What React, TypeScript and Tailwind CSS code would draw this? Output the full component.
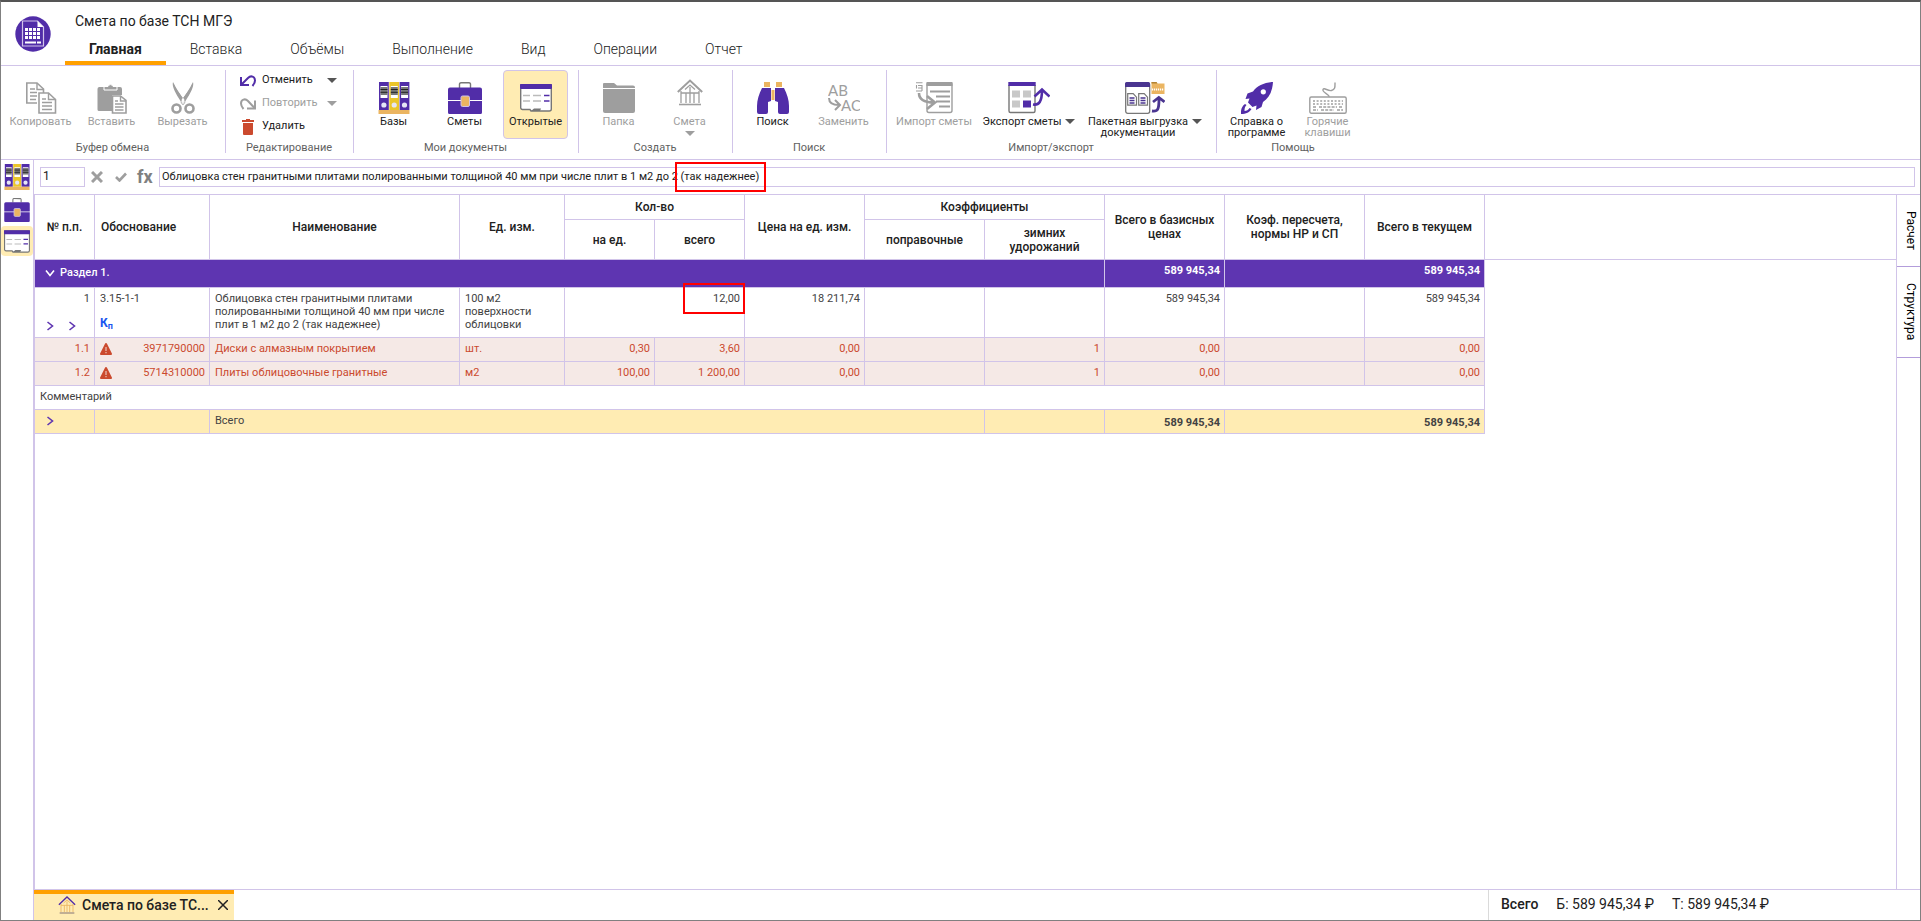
import React from "react";

type IconProps = { className?: string };

const P = "#512da8";
const G = "#9e9e9e";
const T = "#ebb561";

/* ---------- icons ---------- */

function LogoIcon() {
  return (
    <svg viewBox="0 0 36 36" className="size-9" aria-hidden="true">
      <circle cx="18" cy="18" r="17.7" fill={P} />
      <path d="M7.500 5h15l6 6v19h-21z" fill="none" stroke="#d1c4e9" strokeWidth="1.200" />
      <path d="M22.500 5v6h6z" fill="#fff" />
      <path
        d="M10 12h3v3h-3zM14 12h3v3h-3zM18 12h3v3h-3zM22 12h3v3h-3zM10 16h3v3h-3zM14 16h3v3h-3zM18 16h3v3h-3zM22 16h3v3h-3zM10 20h3v3h-3zM14 20h3v3h-3zM18 20h3v3h-3zM22 20h3v3h-3zM10 25.500h11v2h-11zM22 25.500h4v2h-4z"
        fill="#fff"
      />
    </svg>
  );
}

function CopyIcon() {
  return (
    <svg viewBox="0 0 32 32" className="size-8" fill="none" stroke={G} strokeWidth="1.600" aria-hidden="true">
      <path d="M12 21H1.800V1H12l6.500 6v4" />
      <path d="M12 1v6.500h6.500M5 7h5M5 10.500h7M5 14h7M5 17.500h6" strokeWidth="1.400" />
      <path d="M14 11h9.500l7 6.500V31H14z" fill="#fff" />
      <path d="M23.500 11v6.500h7M17 17h4M17 20.500h10M17 24h10M17 27.500h10" strokeWidth="1.400" />
    </svg>
  );
}

function PasteIcon() {
  return (
    <svg viewBox="0 0 32 32" className="size-8" aria-hidden="true">
      <path d="M3 5h6V4h3a3 3 0 0 1 5 0h3v1h4a2 2 0 0 1 2 2v6H16v16H3a1.500 1.500 0 0 1-1.500-1.500V7A2 2 0 0 1 3 5z" fill={G} />
      <path d="M8 4.500h4a2.600 2.600 0 0 1 5 0h4V8H8z" fill={G} stroke="#fff" strokeWidth="1" />
      <path d="M16.500 14h8l5.500 4.500V31H16.500z" fill="#fff" stroke={G} strokeWidth="1.600" />
      <path d="M24.500 14v5H30M19 19h3M19 22h8.500M19 25h8.500M19 28h8.500" fill="none" stroke={G} strokeWidth="1.400" />
    </svg>
  );
}

function CutIcon() {
  return (
    <svg viewBox="0 0 32 32" className="size-8" aria-hidden="true">
      <path d="M6 0c-1.500 4 3 12 7.500 19l3 4 2-3C14 13 9 7 6 0zM26 0c1.500 4-3 12-7.500 19l-3 4-2-3C18 13 23 7 26 0z" fill={G} />
      <path d="M6.500 1c-.5 5 4 12 9.500 20l2-2C13 12 9 8 6.500 1zM25.500 1c.5 5-4 12-9.500 20l-2-2C19 12 23 8 25.500 1z" fill={G} />
      <circle cx="9.500" cy="26.500" r="4" fill="none" stroke={G} strokeWidth="2.600" />
      <circle cx="22.500" cy="26.500" r="4" fill="none" stroke={G} strokeWidth="2.600" />
      <circle cx="16" cy="17.500" r="1.200" fill="#fff" />
    </svg>
  );
}

function UndoIcon() {
  return (
    <svg viewBox="0 0 16 12" className="h-3 w-4" fill="none" stroke={P} strokeWidth="2" aria-hidden="true">
      <path d="M1 2v8h8" />
      <path d="M1.500 9.500 8 3c3-3 7-1.500 7 2.500 0 2-.8 3.500-2.500 5.500" />
    </svg>
  );
}

function RedoIcon() {
  return (
    <svg viewBox="0 0 16 12" className="h-3 w-4" fill="none" stroke={G} strokeWidth="2" aria-hidden="true">
      <path d="M15 2.500v8H7" />
      <path d="M14.500 10 8 3C5 0 1 1.500 1 5.500c0 2 .8 3.500 2.500 5.500" />
    </svg>
  );
}

function TrashIcon() {
  return (
    <svg viewBox="0 0 16 16" className="size-4" fill="#cb4a2e" aria-hidden="true">
      <path d="M2 1h4V0h4v1h4v2H2zM3 4h10v11a1 1 0 0 1-1 1H4a1 1 0 0 1-1-1z" />
    </svg>
  );
}

function BindersIcon({ className }: IconProps) {
  return (
    <svg viewBox="0 0 32 32" className={className ?? "size-8"} aria-hidden="true">
      {[
        { x: 1, c: P },
        { x: 11.300, c: "#ebc62b" },
        { x: 21.600, c: P },
      ].map((b) => (
        <g key={b.x}>
          <rect x={b.x} y="0" width="9.800" height="28" fill={b.c} />
          <rect x={b.x + 1.500} y="4" width="7" height="12" fill="#fff" />
          <rect x={b.x + 1.500} y="5" width="7" height="8" fill="#777" />
          <path d={`M${b.x + 1.500} 7.500h7M${b.x + 1.500} 10.300h7`} stroke="#222" strokeWidth="1" />
          <circle cx={b.x + 4.900} cy="23" r="2.600" fill="#e6e6f5" />
        </g>
      ))}
      <rect x="0.500" y="28" width="31" height="4" fill={T} />
    </svg>
  );
}

function BriefcaseIcon({ className }: IconProps) {
  return (
    <svg viewBox="0 0 34 32" className={className ?? "h-8 w-[34px]"} aria-hidden="true">
      <path d="M11.500 6V2a1.500 1.500 0 0 1 1.500-1.200h8A1.500 1.500 0 0 1 22.500 2v4" fill="none" stroke="#777" strokeWidth="1.400" />
      <path d="M2 5.500h30a2 2 0 0 1 2 2V18H0V7.500a2 2 0 0 1 2-2zM0 19h34v11.500a1.500 1.500 0 0 1-1.500 1.500h-31A1.500 1.500 0 0 1 0 30.500z" fill={P} />
      <rect x="13" y="14" width="8.500" height="10.500" rx="1.500" fill={T} stroke="#cfc4ea" strokeWidth="1" />
    </svg>
  );
}

function OpenDocsIcon({ className }: IconProps) {
  return (
    <svg viewBox="0 0 32 28" className={className ?? "h-7 w-8"} aria-hidden="true">
      <path d="M.7 1h30.600v24a2 2 0 0 1-2 2H11l-1-1.500H2.500A2 2 0 0 1 .7 24z" fill="#fff" stroke="#777" strokeWidth="1.400" />
      <rect width="32" height="5" rx="1" fill={P} />
      <path d="M3 11.500h7M13 11.500h8M3 17h7M13 17h8" stroke="#bbb" strokeWidth="1.300" />
      <path d="M24 11.500h5.500M24 17h5.500" stroke={P} strokeWidth="1.500" />
      <path d="M11 27l3-2.500h7L20 27z" fill="#777" />
    </svg>
  );
}

function FolderIcon() {
  return (
    <svg viewBox="0 0 32 32" className="size-8" aria-hidden="true">
      <path d="M0 6V2a1 1 0 0 1 1-1h10l3 2.500h16a2 2 0 0 1 2 2V6z" fill={G} />
      <path d="M0 7h32v22a2 2 0 0 1-2 2H2a2 2 0 0 1-2-2z" fill={G} />
    </svg>
  );
}

function HouseIcon({ roof, wall, base, className }: { roof: string; wall: string; base: string; className: string }) {
  return (
    <svg viewBox="0 0 26 27" className={className} fill="none" aria-hidden="true">
      <path d="M4 12v12M22 12v12M9 14v10M17 14v10M13 8v16M4 14h18M8 10.500l5-4.500 5 4.500" stroke={wall} strokeWidth="1.300" />
      <path d="M.8 13 13 1.500 25.200 13" stroke={roof} strokeWidth="2" />
      <path d="M2 25.500h22" stroke={base} strokeWidth="1.600" />
    </svg>
  );
}

function BinocularsIcon() {
  return (
    <svg viewBox="0 0 32 32" className="size-8" aria-hidden="true">
      <path d="M7 0h6v5H7zM19 0h6v5h-6zM14.500 8h3v10h-3z" fill={T} />
      <path d="M5 6h9v13l-3 1v10a2 2 0 0 1-2 2H2a2 2 0 0 1-2-2v-6c0-6 2-12 5-18zM27 6h-9v13l3 1v10a2 2 0 0 0 2 2h7a2 2 0 0 0 2-2v-6c0-6-2-12-5-18z" fill={P} />
    </svg>
  );
}

function ReplaceIcon() {
  return (
    <svg viewBox="0 0 32 32" className="size-8" aria-hidden="true">
      <text x="0" y="14" fontSize="15" fill={G} className="font-[Lato]">AB</text>
      <text x="13" y="29" fontSize="15" fill={G} className="font-[Lato]">AC</text>
      <path d="M1 16c0 5 3 7 10 7M7 18l5 5-5 5" fill="none" stroke={G} strokeWidth="2" />
    </svg>
  );
}

function ImportIcon() {
  return (
    <svg viewBox="0 0 38 32" className="h-8 w-[38px]" fill="none" stroke={G} aria-hidden="true">
      <path d="M12 4v24.500a2 2 0 0 0 2 2h21a2 2 0 0 0 2-2V2H12z" strokeWidth="1.400" />
      <path d="M11.500 0h26v4h-26z" fill={G} stroke="none" />
      <path d="M15 9.500h20M21 14.500h14M21 19.500h14M24 24.500h11" strokeWidth="1.800" />
      <path d="M1 .7h6.500M7 3v6M1 9h6M3 3.500h4M3 6h4M1.500 3v3.500" strokeWidth="1.100" />
      <path d="M4 11c0 6 5 9.500 15 9.500M12 14l8 6.500-8 6.500" strokeWidth="2.600" />
    </svg>
  );
}

function ExportIcon() {
  return (
    <svg viewBox="0 0 42 32" className="h-8 w-[42px]" fill="none" aria-hidden="true">
      <path d="M1 3v26a1.500 1.500 0 0 0 1.500 1.500h23A1.500 1.500 0 0 0 27 29V3" stroke="#777" strokeWidth="1.400" />
      <path d="M.3 0h27.400v4H.3z" fill={P} />
      <path d="M4 8.500h8v7H4zM15 8.500h8v7h-8zM4 18.500h8v7H4z" fill="#c8c8c8" />
      <path d="M15 18.500h8v7h-8z" fill={P} />
      <path d="M25 22.500c6 1 9-3 9-14.500M26.500 14.500l7.500-7 7.500 7" stroke={P} strokeWidth="2.600" />
    </svg>
  );
}

function BatchIcon() {
  return (
    <svg viewBox="0 0 40 32" className="h-8 w-10" fill="none" aria-hidden="true">
      <rect x=".7" y="1" width="24" height="30.300" rx="2" stroke="#777" strokeWidth="1.300" />
      <path d="M0 5V1.500A1.500 1.500 0 0 1 1.500 0h22A1.500 1.500 0 0 1 25 1.500V5z" fill="#4a3590" />
      <path d="M2.700 11.700h5.500l3.300 3.500v8H2.700zM13.700 11.700h5.500l3.300 3.500v8h-8.800z" stroke="#777" strokeWidth="1.200" />
      <path d="M4.500 16h5M4.500 18.500h5M4.500 21h5M15.500 16h5M15.500 18.500h5M15.500 21h5" stroke="#4a3590" strokeWidth="1.400" />
      <path d="M26.500 0h5l1 1.500H39.500V12h-13z" fill={T} />
      <path d="M26.500 0h5l1 1.500h-6z" fill="#b28334" />
      <path d="M27 7.500h12" stroke="#fff" strokeWidth="2" strokeDasharray="1.200 .8" />
      <path d="M27 29c6 1 7-2 7-12M28 20l5.800-4.500L39.500 20" stroke="#4a3590" strokeWidth="2.800" />
    </svg>
  );
}

function RocketIcon() {
  return (
    <svg viewBox="0 0 32 32" className="size-8" aria-hidden="true">
      <path d="M32 0c-9 .5-16 4-20 9.500L6.500 11.500 4.500 17l4-.500L7 20.500l4.500 4.500 4-1.500-.5 4.500 5.500-3 1.500-5C28 16 31.500 9 32 0z" fill={P} />
      <circle cx="22.300" cy="9.800" r="2.600" fill="#fff" />
      <path d="M4 22c-3 2-4.500 6-4 10C5 32 9 30 10.500 27l-2-1c-1 2-3 3-5 3 0-3 .5-4.500 2-6z" fill={P} />
    </svg>
  );
}

function KeyboardIcon() {
  return (
    <svg viewBox="0 0 38 32" className="h-8 w-[38px]" fill="none" stroke={G} aria-hidden="true">
      <rect x=".8" y="15" width="36.400" height="16.200" rx="1.500" strokeWidth="1.400" />
      <path d="M4 19h30M4 22h30" strokeWidth="1.600" strokeDasharray="2 1.600" />
      <path d="M4 25h4M10 25h18M30 25h4M4 28h5M12 28h13M28 28h6" strokeWidth="1.500" strokeDasharray="3 1.200" />
      <path d="M20 15c1-3-7-4-6-7.500 1-2.500 5 2 8.500 1 4-1 3.500-4 3.500-8" strokeWidth="1.400" />
    </svg>
  );
}

function Caret({ muted }: { muted?: boolean }) {
  return (
    <svg viewBox="0 0 10 5" className="h-[5px] w-2.5 shrink-0" aria-hidden="true">
      <path d="M0 0h10L5 5z" fill={muted ? G : "#555"} />
    </svg>
  );
}

function Chevron({ className }: IconProps) {
  return (
    <svg viewBox="0 0 10 10" className={className ?? "size-2.5"} fill="none" stroke="currentColor" strokeWidth="1.600" aria-hidden="true">
      <path d="M2.500 1l5 4-5 4" />
    </svg>
  );
}

function WarningIcon() {
  return (
    <svg viewBox="0 0 12 12" className="size-3" aria-hidden="true">
      <path d="M6 0a1 1 0 0 1 .9.500l5 10a1 1 0 0 1-.9 1.500H1a1 1 0 0 1-.9-1.500l5-10A1 1 0 0 1 6 0z" fill="#cb4a2e" />
      <path d="M6 4v4M6 9v1.300" stroke="#e8b9ad" strokeWidth="1.300" />
    </svg>
  );
}

/* ---------- ribbon ---------- */

type ToolProps = {
  icon: React.ReactNode;
  label: React.ReactNode;
  muted?: boolean;
  active?: boolean;
  width?: string;
  below?: React.ReactNode;
};

function Tool({ icon, label, muted, active, width, below }: ToolProps) {
  return (
    <button
      type="button"
      className={`flex h-[69px] flex-col items-center whitespace-nowrap rounded border pt-[11px] text-[11px] leading-[11px] ${width ?? "w-[65px]"} ${
        active ? "border-[#d1c4e9] bg-[#ffecb3]" : "border-transparent"
      } ${muted ? "text-[#9e9e9e]" : "text-[#212121]"}`}
    >
      <span className="flex h-8 items-center justify-center">{icon}</span>
      <span className="mt-0.5">{label}</span>
      {below}
    </button>
  );
}

function Group({ title, children, last }: { title: string; children: React.ReactNode; last?: boolean }) {
  return (
    <section aria-label={title} className={`flex h-[83px] flex-col pl-[7px] ${last ? "" : "border-r border-[#d1c4e9]"}`}>
      <div className="flex h-[69px] gap-1.5 pr-2.5">{children}</div>
      <h2 className="pr-2 pt-px text-center text-[11px] leading-[15px] text-[#616161]">{title}</h2>
    </section>
  );
}

function SmallTool({ icon, label, muted, caret }: { icon: React.ReactNode; label: string; muted?: boolean; caret?: boolean }) {
  return (
    <button type="button" className={`flex h-[23px] items-center pb-0.5 text-[11px] ${muted ? "text-[#9e9e9e]" : "text-[#212121]"}`}>
      <span className="flex w-[22px]">{icon}</span>
      <span className="w-[65px] text-left">{label}</span>
      {caret && <Caret muted={muted} />}
    </button>
  );
}

const tabs = ["Главная", "Вставка", "Объёмы", "Выполнение", "Вид", "Операции", "Отчет"];

/* ---------- estimate table ---------- */

const cell = "border-b border-r border-[#d1c4e9] pl-[5px] pr-1 align-top";
const head = "border-b border-r border-[#d1c4e9] px-1 align-middle font-medium";

const resources = [
  { n: "1.1", code: "3971790000", name: "Диски с алмазным покрытием", unit: "шт.", per: "0,30", all: "3,60" },
  { n: "1.2", code: "5714310000", name: "Плиты облицовочные гранитные", unit: "м2", per: "100,00", all: "1 200,00" },
];

function EstimateTable() {
  return (
    <table className="w-[1450px] table-fixed border-separate border-spacing-0 self-start text-[11px] leading-[13px] text-[#424242]">
      <colgroup>
        <col className="w-[60px]" />
        <col className="w-[115px]" />
        <col className="w-[250px]" />
        <col className="w-[105px]" />
        <col className="w-[90px]" />
        <col className="w-[90px]" />
        <col className="w-[120px]" />
        <col className="w-[120px]" />
        <col className="w-[120px]" />
        <col className="w-[120px]" />
        <col className="w-[140px]" />
        <col className="w-[120px]" />
      </colgroup>
      <thead className="text-[12px] leading-[14px] text-[#212121]">
        <tr className="h-[25px]">
          <th rowSpan={2} className={head}>№ п.п.</th>
          <th rowSpan={2} className={`${head} pl-1.5 text-left`}>Обоснование</th>
          <th rowSpan={2} className={head}>Наименование</th>
          <th rowSpan={2} className={head}>Ед. изм.</th>
          <th colSpan={2} className={head}>Кол-во</th>
          <th rowSpan={2} className={head}>Цена на ед. изм.</th>
          <th colSpan={2} className={head}>Коэффициенты</th>
          <th rowSpan={2} className={head}>Всего в базисных ценах</th>
          <th rowSpan={2} className={head}>Коэф. пересчета, нормы НР и СП</th>
          <th rowSpan={2} className={head}>Всего в текущем</th>
        </tr>
        <tr className="h-10">
          <th className={head}>на ед.</th>
          <th className={head}>всего</th>
          <th className={head}>поправочные</th>
          <th className={head}>зимних удорожаний</th>
        </tr>
      </thead>
      <tbody>
        <tr className="h-7 bg-[#5e35b1] text-white">
          <td colSpan={9} className={`${cell} pt-1.5`}>
            <button type="button" className="flex items-center gap-[5px] pl-[5px] font-medium">
              <Chevron className="size-2.5 rotate-90" />
              Раздел 1.
            </button>
          </td>
          <td className={`${cell} pt-1 text-right font-bold`}>589 945,34</td>
          <td colSpan={2} className={`${cell} pt-1 text-right font-bold`}>589 945,34</td>
        </tr>
        <tr className="h-[50px]">
          <td className={`${cell} pt-1 text-right`}>
            1
            <span className="flex gap-3 pl-[5px] pt-4 text-[#5e35b1]">
              <button type="button" aria-label="Развернуть ресурсы"><Chevron /></button>
              <button type="button" aria-label="Развернуть расчет"><Chevron /></button>
            </span>
          </td>
          <td className={`${cell} pt-1`}>
            3.15-1-1
            <span className="block pt-3 text-[12px] font-bold text-[#1a56f0]">
              К<sub className="text-[9px]">п</sub>
            </span>
          </td>
          <td className={`${cell} pt-1`}>Облицовка стен гранитными плитами полированными толщиной 40 мм при числе плит в 1 м2 до 2 (так надежнее)</td>
          <td className={`${cell} pt-1`}>100 м2 поверхности облицовки</td>
          <td colSpan={2} className={`${cell} relative pt-1 text-right`}>
            12,00
            <span className="pointer-events-none absolute -right-px -top-[5px] h-[31px] w-[62px] border-2 border-[#ff0000]" />
          </td>
          <td className={`${cell} pt-1 text-right`}>18 211,74</td>
          <td className={cell} />
          <td className={cell} />
          <td className={`${cell} pt-1 text-right`}>589 945,34</td>
          <td className={cell} />
          <td className={`${cell} pt-1 text-right`}>589 945,34</td>
        </tr>
        {resources.map((r) => (
          <tr key={r.n} className="h-6 bg-[#f5e9e6] text-[#cb4a2e]">
            <td className={`${cell} pt-1 text-right`}>{r.n}</td>
            <td className={`${cell} pt-1`}>
              <span className="flex items-end justify-between">
                <WarningIcon />
                {r.code}
              </span>
            </td>
            <td className={`${cell} pt-1`}>{r.name}</td>
            <td className={`${cell} pt-1`}>{r.unit}</td>
            <td className={`${cell} pt-1 text-right`}>{r.per}</td>
            <td className={`${cell} pt-1 text-right`}>{r.all}</td>
            <td className={`${cell} pt-1 text-right`}>0,00</td>
            <td className={cell} />
            <td className={`${cell} pt-1 text-right`}>1</td>
            <td className={`${cell} pt-1 text-right`}>0,00</td>
            <td className={cell} />
            <td className={`${cell} pt-1 text-right`}>0,00</td>
          </tr>
        ))}
        <tr className="h-6">
          <td colSpan={12} className={`${cell} pt-1`}>Комментарий</td>
        </tr>
        <tr className="h-6 bg-[#ffecb3]">
          <td className={`${cell} pt-1.5`}>
            <button type="button" aria-label="Развернуть итог" className="block pl-[5px] text-[#5e35b1]"><Chevron /></button>
          </td>
          <td className={cell} />
          <td colSpan={6} className={`${cell} pt-1`}>Всего</td>
          <td className={cell} />
          <td className={`${cell} pt-1.5 text-right font-bold`}>589 945,34</td>
          <td colSpan={2} className={`${cell} pt-1.5 text-right font-bold`}>589 945,34</td>
        </tr>
      </tbody>
    </table>
  );
}

export default function App() {
  return (
    <div className="flex h-screen min-h-[600px] flex-col overflow-hidden border border-t-2 border-[#808080] border-t-[#555] bg-white font-[Roboto,'Liberation_Sans',sans-serif] text-[#212121]">
      <header className="flex h-16 shrink-0 items-stretch border-b border-[#d1c4e9]">
        <div className="flex w-16 justify-center pt-3.5">
          <span><LogoIcon /></span>
        </div>
        <div className="flex flex-col">
          <h1 className="pl-2.5 pt-2 text-[14px] leading-[22px]">Смета по базе ТСН МГЭ</h1>
          <nav aria-label="Разделы" className="mt-auto flex h-[33px]">
            {tabs.map((t, i) => (
              <a
                key={t}
                href="#"
                className={`border-b-4 px-6 pt-2 text-[14px] leading-[18px] ${
                  i === 0 ? "border-[#ffa000] font-bold" : "border-transparent font-light"
                }`}
              >
                {t}
              </a>
            ))}
          </nav>
        </div>
      </header>

      <div className="flex h-[94px] shrink-0 border-b border-[#d1c4e9] pt-1">
        <Group title="Буфер обмена">
          <Tool icon={<CopyIcon />} label="Копировать" muted />
          <Tool icon={<PasteIcon />} label="Вставить" muted />
          <Tool icon={<CutIcon />} label="Вырезать" muted />
        </Group>
        <Group title="Редактирование">
          <div className="flex w-[110px] flex-col pl-[7px]">
            <SmallTool icon={<UndoIcon />} label="Отменить" caret />
            <SmallTool icon={<RedoIcon />} label="Повторить" muted caret />
            <SmallTool icon={<TrashIcon />} label="Удалить" />
          </div>
        </Group>
        <Group title="Мои документы">
          <Tool icon={<BindersIcon />} label="Базы" />
          <Tool icon={<BriefcaseIcon />} label="Сметы" />
          <Tool icon={<OpenDocsIcon />} label="Открытые" active />
        </Group>
        <Group title="Создать">
          <Tool icon={<FolderIcon />} label="Папка" muted />
          <Tool
            icon={<HouseIcon roof={G} wall={G} base={G} className="mb-3 h-[27px] w-[26px]" />}
            label="Смета"
            muted
            below={<span className="mt-1"><Caret muted /></span>}
          />
        </Group>
        <Group title="Поиск">
          <Tool icon={<BinocularsIcon />} label="Поиск" />
          <Tool icon={<ReplaceIcon />} label="Заменить" muted />
        </Group>
        <Group title="Импорт/экспорт">
          <Tool icon={<ImportIcon />} label="Импорт сметы" muted width="w-[80px]" />
          <Tool
            icon={<ExportIcon />}
            label={<span className="flex items-center gap-1">Экспорт сметы <Caret /></span>}
            width="w-[98px]"
          />
          <Tool
            icon={<BatchIcon />}
            label={
              <>
                <span className="flex items-center gap-1">Пакетная выгрузка <Caret /></span>
                <span className="block pr-3.5">документации</span>
              </>
            }
            width="w-[122px]"
          />
        </Group>
        <Group title="Помощь" last>
          <Tool icon={<RocketIcon />} label={<>Справка о<br />программе</>} />
          <Tool icon={<KeyboardIcon />} label={<>Горячие<br />клавиши</>} muted />
        </Group>
      </div>

      <div className="flex min-h-0 flex-1">
        <aside className="flex w-8 shrink-0 flex-col items-center">
          <button type="button" aria-label="Базы" className="flex h-[34px] w-8 items-center justify-center">
            <BindersIcon className="size-[26px]" />
          </button>
          <button type="button" aria-label="Сметы" className="flex h-8 w-8 items-center justify-center">
            <BriefcaseIcon className="h-6 w-[26px]" />
          </button>
          <button type="button" aria-label="Открытые" className="flex h-[30px] w-8 items-center justify-center rounded bg-[#ffecb3]">
            <OpenDocsIcon className="h-[23px] w-[26px]" />
          </button>
        </aside>

        <main className="flex min-w-0 flex-1 flex-col border-l border-[#d1c4e9]">
          <div className="flex h-[34px] shrink-0 items-center pl-1.5 pr-[5px]">
            <input
              aria-label="Номер позиции"
              defaultValue="1"
              className="h-5 w-[45px] border border-[#d1c4e9] pb-0.5 pl-0.5 text-[12px] outline-none"
            />
            <button type="button" aria-label="Отменить ввод" className="ml-1.5">
              <svg viewBox="0 0 12 12" className="size-3" stroke={G} strokeWidth="3" fill="none" aria-hidden="true">
                <path d="M1 1l10 10M11 1 1 11" />
              </svg>
            </button>
            <button type="button" aria-label="Принять ввод" className="ml-3">
              <svg viewBox="0 0 12 10" className="h-2.5 w-3" stroke={G} strokeWidth="2.600" fill="none" aria-hidden="true">
                <path d="M1 5l3.500 3.500L11 1.500" />
              </svg>
            </button>
            <span aria-hidden="true" className="ml-2.5 w-[22px] text-[18px] font-bold leading-5 text-[#808080]">fx</span>
            <div className="relative flex-1">
              <input
                aria-label="Содержимое ячейки"
                defaultValue="Облицовка стен гранитными плитами полированными толщиной 40 мм при числе плит в 1 м2 до 2 (так надежнее)"
                className="block h-5 w-full border border-[#d1c4e9] pb-0.5 pl-0.5 text-[11px] outline-none"
              />
              <span className="pointer-events-none absolute -top-[5px] left-[516px] h-[30px] w-[91px] border-2 border-[#ff0000]" />
            </div>
          </div>

          <div className="flex min-h-0 flex-1 border-t border-[#d1c4e9]">
            <div className="flex min-w-0 flex-1 border-l border-[#d1c4e9]">
              <EstimateTable />
              <div className="h-[65px] flex-1 border-b border-[#d1c4e9]" />
            </div>
            <div className="flex w-6 shrink-0 flex-col border-l border-[#d1c4e9] text-[12px] text-black">
              <button type="button" className="flex h-[72px] items-center justify-center border-b border-[#b39ddb] pl-1 [writing-mode:vertical-rl]">Расчет</button>
              <button type="button" className="flex h-[91px] items-center justify-center border-b border-[#b39ddb] pl-1 [writing-mode:vertical-rl]">Структура</button>
            </div>
          </div>

          <footer className="flex h-[31px] shrink-0 items-stretch border-t border-[#d1c4e9]">
            <div className="flex w-[200px] items-center border-t-4 border-[#ffa000] bg-[#ffecb3] pb-1 pl-6 pr-1.5">
              <HouseIcon roof={P} wall={T} base="#8a7a7a" className="h-[18px] w-[18px]" />
              <button type="button" className="ml-1.5 whitespace-nowrap text-left text-[14px] font-medium">
                Смета по базе ТС...
              </button>
              <button type="button" aria-label="Закрыть" className="ml-auto">
                <svg viewBox="0 0 10 10" className="size-2.5" stroke="#222" strokeWidth="1.500" aria-hidden="true">
                  <path d="M0 0l10 10M10 0 0 10" />
                </svg>
              </button>
            </div>
            <div className="ml-auto flex w-[432px] gap-[18px] border-l border-[#dadada] pl-3 text-[14px] leading-7">
              <span className="font-medium">Всего</span>
              <span>Б: 589 945,34 ₽</span>
              <span>Т: 589 945,34 ₽</span>
            </div>
          </footer>
        </main>
      </div>
    </div>
  );
}
